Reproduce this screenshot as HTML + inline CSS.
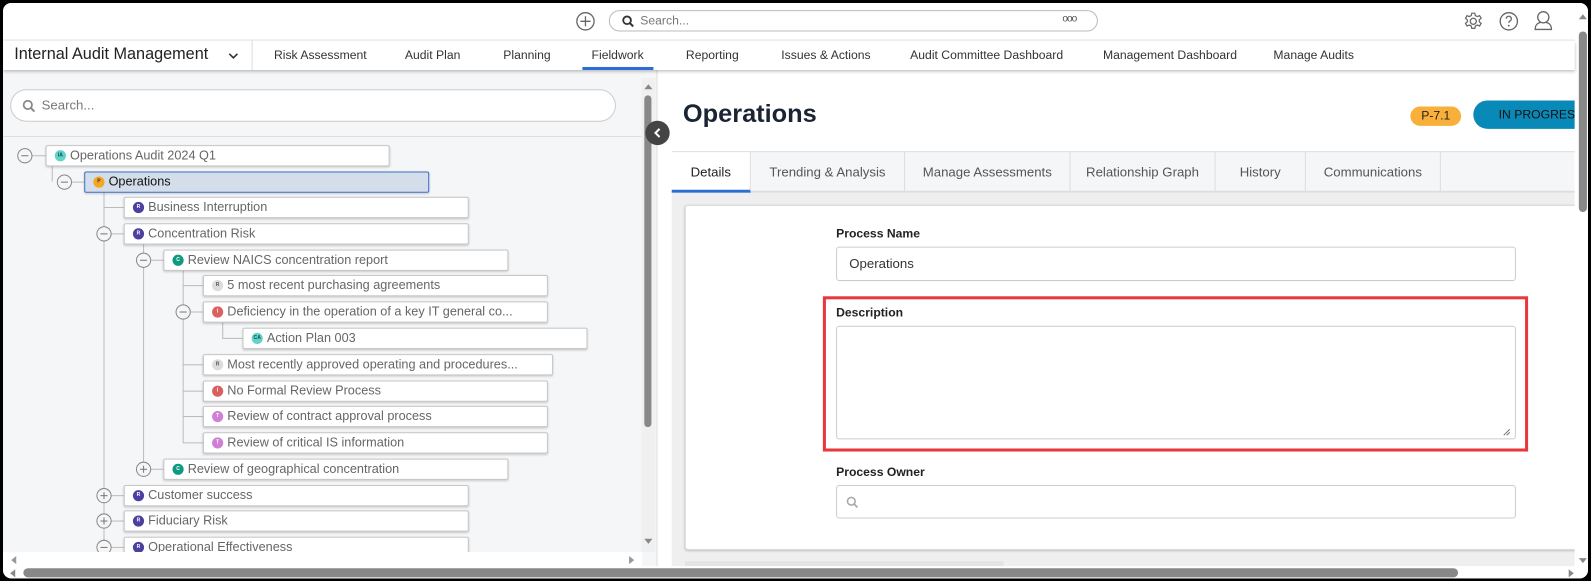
<!DOCTYPE html>
<html><head><meta charset="utf-8"><style>
*{box-sizing:border-box;margin:0;padding:0}
body{width:1591px;height:581px;background:#000;font-family:"Liberation Sans",sans-serif;overflow:hidden;position:relative}
#wrap{position:absolute;left:0;top:0;width:1568px;height:573px;transform:scale(1.01467);transform-origin:0 0}
.a{position:absolute}
#frame{position:absolute;left:3px;top:3px;width:1562px;height:567px;background:#fff;border-radius:8px;overflow:hidden}
.nav{font-size:12px;color:#333;top:47px;white-space:nowrap}
.node{position:absolute;height:21px;background:#fff;border:1px solid #c8c8c8;border-radius:2px;box-shadow:0 1px 2px rgba(0,0,0,.18);font-size:12.5px;color:#666;line-height:19px;padding-left:23px;white-space:nowrap;overflow:hidden}
.ic{position:absolute;left:8px;top:4px;width:11px;height:11px;border-radius:50%;font-size:5px;color:#fff;text-align:center;line-height:11px;font-weight:bold}
.cir{position:absolute;width:15px;height:15px;border:1px solid #888;border-radius:50%;background:#f5f6f8}
.cir:before{content:"";position:absolute;left:3px;top:6px;width:7px;height:1.3px;background:#777}
.cir.p:after{content:"";position:absolute;left:6px;top:3px;width:1.3px;height:7px;background:#777}
.vl{position:absolute;width:1px;background:#bbb}
.hl{position:absolute;height:1px;background:#bbb}
.tab{position:absolute;top:0;height:39px;font-size:13px;color:#555;line-height:39px;text-align:center;border-right:1px solid #ddd;white-space:nowrap}
.lbl{position:absolute;font-size:12px;color:#222;font-weight:bold;left:821px}
.inp{position:absolute;left:821px;width:670px;background:#fff;border:1px solid #ccc;border-radius:3px}
</style></head><body><div id="wrap">
<div id="frame">
<div class="a" style="left:0;top:0;width:1565px;height:37px;background:#fff;border-bottom:1px solid #e2e2e2"></div>
<svg class="a" style="left:564px;top:8px" width="20" height="20" viewBox="0 0 20 20"><circle cx="10" cy="10" r="8.5" fill="none" stroke="#666" stroke-width="1.3"/><path d="M10 5v10M5 10h10" stroke="#666" stroke-width="1.3"/></svg>
<div class="a" style="left:597px;top:7px;width:482px;height:21px;border:1px solid #bbb;border-radius:11px"></div>
<svg class="a" style="left:610px;top:12px" width="12" height="12" viewBox="0 0 12 12"><circle cx="5" cy="5" r="3.8" fill="none" stroke="#333" stroke-width="1.8"/><path d="M8 8l3 3" stroke="#333" stroke-width="2"/></svg>
<div class="a" style="left:628px;top:10px;font-size:12px;color:#777">Search...</div>
<div class="a" style="left:1044px;top:10px;font-size:10px;color:#555;letter-spacing:-1px">ooo</div>
<svg class="a" style="left:1439px;top:8px" width="20" height="20" viewBox="0 0 20 20"><circle cx="10" cy="10" r="3" fill="none" stroke="#666" stroke-width="1.3"/><path d="M8.5 2h3l.5 2.3 2 1 2.2-.9 1.5 2.6-1.8 1.5v2l1.8 1.5-1.5 2.6-2.2-.9-2 1-.5 2.3h-3l-.5-2.3-2-1-2.2.9-1.5-2.6 1.8-1.5v-2L2.3 7l1.5-2.6 2.2.9 2-1z" fill="none" stroke="#666" stroke-width="1.2"/></svg>
<svg class="a" style="left:1474px;top:8px" width="20" height="20" viewBox="0 0 20 20"><circle cx="10" cy="10" r="8.5" fill="none" stroke="#666" stroke-width="1.3"/><path d="M7.5 7.5a2.5 2.5 0 1 1 3.5 2.3c-.7.4-1 .9-1 1.7" fill="none" stroke="#666" stroke-width="1.3"/><circle cx="10" cy="14.3" r=".9" fill="#666"/></svg>
<svg class="a" style="left:1508px;top:7px" width="20" height="22" viewBox="0 0 20 22"><circle cx="10" cy="7" r="5.5" fill="none" stroke="#666" stroke-width="1.3"/><path d="M7.5 12c-4 1-5.5 3-5.5 7h16c0-4-1.5-6-5.5-7" fill="none" stroke="#666" stroke-width="1.3"/></svg>
<div class="a" style="left:0;top:37px;width:1549px;height:29px;background:#fff;box-shadow:0 2px 3px rgba(0,0,0,.25);z-index:2">
<div class="a" style="left:11px;top:5px;font-size:16px;color:#222;white-space:nowrap">Internal Audit Management</div>
<svg class="a" style="left:222px;top:11px" width="10" height="8" viewBox="0 0 10 8"><path d="M1 2l4 4 4-4" fill="none" stroke="#333" stroke-width="1.6"/></svg>
<div class="a" style="left:245px;top:0;width:1px;height:29px;background:#ddd"></div>
<div class="a" style="left:571px;top:26px;width:70px;height:3px;background:#2c6ed5"></div>
</div>
<div style="position:absolute;left:0;top:-3px;z-index:3">
<div class="a nav" style="left:267px">Risk Assessment</div>
<div class="a nav" style="left:396px">Audit Plan</div>
<div class="a nav" style="left:493px">Planning</div>
<div class="a nav" style="left:580px">Fieldwork</div>
<div class="a nav" style="left:673px">Reporting</div>
<div class="a nav" style="left:767px">Issues &amp; Actions</div>
<div class="a nav" style="left:894px">Audit Committee Dashboard</div>
<div class="a nav" style="left:1084px">Management Dashboard</div>
<div class="a nav" style="left:1252px">Manage Audits</div>
</div>
<div class="a" style="left:0;top:66px;width:645px;height:491px;background:#f5f6f8;border-right:1px solid #ddd;overflow:hidden">
<div class="a" style="left:7px;top:19px;width:597px;height:32px;background:#fff;border:1px solid #ccc;border-radius:16px"></div>
<svg class="a" style="left:19px;top:29px" width="13" height="13" viewBox="0 0 12 12"><circle cx="5" cy="5" r="3.8" fill="none" stroke="#888" stroke-width="1.6"/><path d="M8 8l3 3" stroke="#888" stroke-width="1.8"/></svg>
<div class="a" style="left:38px;top:27px;font-size:13px;color:#777">Search...</div>
<div class="a" style="left:0;top:65px;width:630px;height:1px;background:#ddd"></div>
<div class="a" style="left:0;top:66px;width:630px;height:409px;overflow:hidden">
<div style="position:absolute;left:0;top:-135px">
<div class="vl" style="left:48px;top:164px;height:15px"></div>
<div class="vl" style="left:99px;top:189px;height:350px"></div>
<div class="vl" style="left:138px;top:240px;height:222px"></div>
<div class="vl" style="left:177px;top:266px;height:170px"></div>
<div class="vl" style="left:216px;top:317px;height:16px"></div>
<div class="hl" style="left:28px;top:153px;width:14px"></div>
<div class="hl" style="left:67px;top:179px;width:13px"></div>
<div class="hl" style="left:99px;top:204px;width:20px"></div>
<div class="hl" style="left:106px;top:230px;width:13px"></div>
<div class="hl" style="left:145px;top:256px;width:13px"></div>
<div class="hl" style="left:177px;top:281px;width:20px"></div>
<div class="hl" style="left:184px;top:307px;width:13px"></div>
<div class="hl" style="left:216px;top:333px;width:20px"></div>
<div class="hl" style="left:177px;top:359px;width:20px"></div>
<div class="hl" style="left:177px;top:385px;width:20px"></div>
<div class="hl" style="left:177px;top:410px;width:20px"></div>
<div class="hl" style="left:177px;top:436px;width:20px"></div>
<div class="hl" style="left:145px;top:462px;width:13px"></div>
<div class="hl" style="left:106px;top:488px;width:13px"></div>
<div class="hl" style="left:106px;top:513px;width:13px"></div>
<div class="hl" style="left:106px;top:539px;width:13px"></div>
<div class="cir" style="left:14px;top:146px"></div>
<div class="cir" style="left:53px;top:172px"></div>
<div class="cir" style="left:92px;top:223px"></div>
<div class="cir" style="left:131px;top:249px"></div>
<div class="cir" style="left:170px;top:300px"></div>
<div class="cir p" style="left:131px;top:455px"></div>
<div class="cir p" style="left:92px;top:481px"></div>
<div class="cir p" style="left:92px;top:506px"></div>
<div class="cir" style="left:92px;top:532px"></div>
<div class="node" style="left:42px;top:143px;width:339px"><span class="ic" style="background:#5fd4c8;color:#245">IA</span>Operations Audit 2024 Q1</div>
<div class="node" style="left:80px;top:169px;width:340px;background:#d4deeb;border-color:#3b73c9;color:#111"><span class="ic" style="background:#f5a623;color:#333">P</span>Operations</div>
<div class="node" style="left:119px;top:194px;width:340px"><span class="ic" style="background:#4b3fa0">R</span>Business Interruption</div>
<div class="node" style="left:119px;top:220px;width:340px"><span class="ic" style="background:#4b3fa0">R</span>Concentration Risk</div>
<div class="node" style="left:158px;top:246px;width:340px"><span class="ic" style="background:#0e9a80">C</span>Review NAICS concentration report</div>
<div class="node" style="left:197px;top:271px;width:340px"><span class="ic" style="background:#dcdcdc;color:#555">R</span>5 most recent purchasing agreements</div>
<div class="node" style="left:197px;top:297px;width:340px"><span class="ic" style="background:#d9625e">I</span>Deficiency in the operation of a key IT general co...</div>
<div class="node" style="left:236px;top:323px;width:340px"><span class="ic" style="background:#5fd4c8;color:#245">CA</span>Action Plan 003</div>
<div class="node" style="left:197px;top:349px;width:345px"><span class="ic" style="background:#dcdcdc;color:#555">R</span>Most recently approved operating and procedures...</div>
<div class="node" style="left:197px;top:375px;width:340px"><span class="ic" style="background:#d9625e">I</span>No Formal Review Process</div>
<div class="node" style="left:197px;top:400px;width:340px"><span class="ic" style="background:#d07fd6">T</span>Review of contract approval process</div>
<div class="node" style="left:197px;top:426px;width:340px"><span class="ic" style="background:#d07fd6">T</span>Review of critical IS information</div>
<div class="node" style="left:158px;top:452px;width:340px"><span class="ic" style="background:#0e9a80">C</span>Review of geographical concentration</div>
<div class="node" style="left:119px;top:478px;width:340px"><span class="ic" style="background:#4b3fa0">R</span>Customer success</div>
<div class="node" style="left:119px;top:503px;width:340px"><span class="ic" style="background:#4b3fa0">R</span>Fiduciary Risk</div>
<div class="node" style="left:119px;top:529px;width:340px"><span class="ic" style="background:#4b3fa0">R</span>Operational Effectiveness</div>
</div></div>
<div class="a" style="left:629px;top:8px;width:14px;height:467px;background:#f0f0f0"></div>
<div class="a" style="left:632px;top:25px;width:7px;height:327px;background:#888;border-radius:4px"></div>
<div class="a" style="left:632px;top:14px;width:0;height:0;border:4px solid transparent;border-bottom:5px solid #888;border-top:0"></div>
<div class="a" style="left:632px;top:462px;width:0;height:0;border:4px solid transparent;border-top:5px solid #888;border-bottom:0"></div>
<div class="a" style="left:0;top:475px;width:630px;height:16px;background:#fff"></div>
<div class="a" style="left:8px;top:479px;border:4px solid transparent;border-right:5px solid #999;border-left:0"></div>
<div class="a" style="left:617px;top:479px;border:4px solid transparent;border-left:5px solid #999;border-right:0"></div>
</div>
<div class="a" style="left:633px;top:116px;width:24px;height:24px;border-radius:50%;background:#444;z-index:4"></div>
<svg class="a" style="left:640px;top:122px;z-index:5" width="10" height="12" viewBox="0 0 10 12"><path d="M7 2L3 6l4 4" fill="none" stroke="#fff" stroke-width="2"/></svg>
<div class="a" style="left:646px;top:66px;width:903px;height:491px;background:#fff;overflow:hidden">
<div class="a" style="left:24px;top:29px;font-size:25px;font-weight:bold;color:#1a2433">Operations</div>
<div class="a" style="left:741px;top:36px;width:50px;height:19px;border-radius:10px;background:#f9b03b;font-size:12px;color:#222;text-align:center;line-height:19px">P-7.1</div>
<div class="a" style="left:803px;top:30px;width:140px;height:28px;border-radius:14px 0 0 14px;background:#0989b8;font-size:12px;color:#111;line-height:28px;padding-left:25px;white-space:nowrap">IN PROGRESS</div>
<div class="a" style="left:13px;top:80px;width:890px;height:41px;background:#f5f6f8;border-top:1px solid #ddd;border-bottom:2px solid #ddd">
<div class="tab" style="left:0;width:78px;background:#fff;color:#222;border-bottom:3px solid #2c6ed5;height:40px">Details</div>
<div class="tab" style="left:78px;width:152px">Trending &amp; Analysis</div>
<div class="tab" style="left:230px;width:163px">Manage Assessments</div>
<div class="tab" style="left:393px;width:143px">Relationship Graph</div>
<div class="tab" style="left:536px;width:89px">History</div>
<div class="tab" style="left:625px;width:133px">Communications</div>
</div>
<div class="a" style="left:13px;top:121px;width:890px;height:370px;background:#efefef"></div>
<div class="a" style="left:26px;top:133px;width:880px;height:340px;background:#fff;border:1px solid #ddd;border-radius:3px;box-shadow:0 1px 2px rgba(0,0,0,.2)"></div>
<div class="a" style="left:26px;top:484px;width:314px;height:5px;background:#e4e4e4"></div>
</div>
<div class="lbl" style="top:220px">Process Name</div>
<div class="inp" style="top:240px;height:34px;font-size:13px;color:#333;padding:8px 12px">Operations</div>
<div class="a" style="left:808px;top:289px;width:695px;height:153px;border:3px solid #e8383d"></div>
<div class="lbl" style="top:298px">Description</div>
<div class="inp" style="top:318px;height:112px"></div>
<svg class="a" style="left:1478px;top:419px" width="8" height="8"><path d="M1 7l6-6M4 7l3-3" stroke="#777"/></svg>
<div class="lbl" style="top:455px">Process Owner</div>
<div class="inp" style="top:475px;height:33px"></div>
<svg class="a" style="left:831px;top:486px" width="12" height="12" viewBox="0 0 12 12"><circle cx="5" cy="5" r="3.8" fill="none" stroke="#aaa" stroke-width="1.6"/><path d="M8 8l3 3" stroke="#aaa" stroke-width="1.8"/></svg>
<div class="a" style="left:1549px;top:0;width:16px;height:557px;background:#fff"></div>
<div class="a" style="left:1553px;top:28px;width:8px;height:178px;background:#888;border-radius:4px"></div>
<div class="a" style="left:1553px;top:11px;border:4px solid transparent;border-bottom:5px solid #888;border-top:0"></div>
<div class="a" style="left:1553px;top:547px;border:4px solid transparent;border-top:5px solid #888;border-bottom:0"></div>
<div class="a" style="left:0;top:555px;width:1565px;height:15px;background:#fff"></div>
<div class="a" style="left:20px;top:557px;width:1414px;height:9px;background:#888;border-radius:5px"></div>
<div class="a" style="left:7px;top:558px;border:4px solid transparent;border-right:5px solid #888;border-left:0"></div>
<div class="a" style="left:1543px;top:558px;border:4px solid transparent;border-left:5px solid #888;border-right:0"></div>
</div>
</div></body></html>
